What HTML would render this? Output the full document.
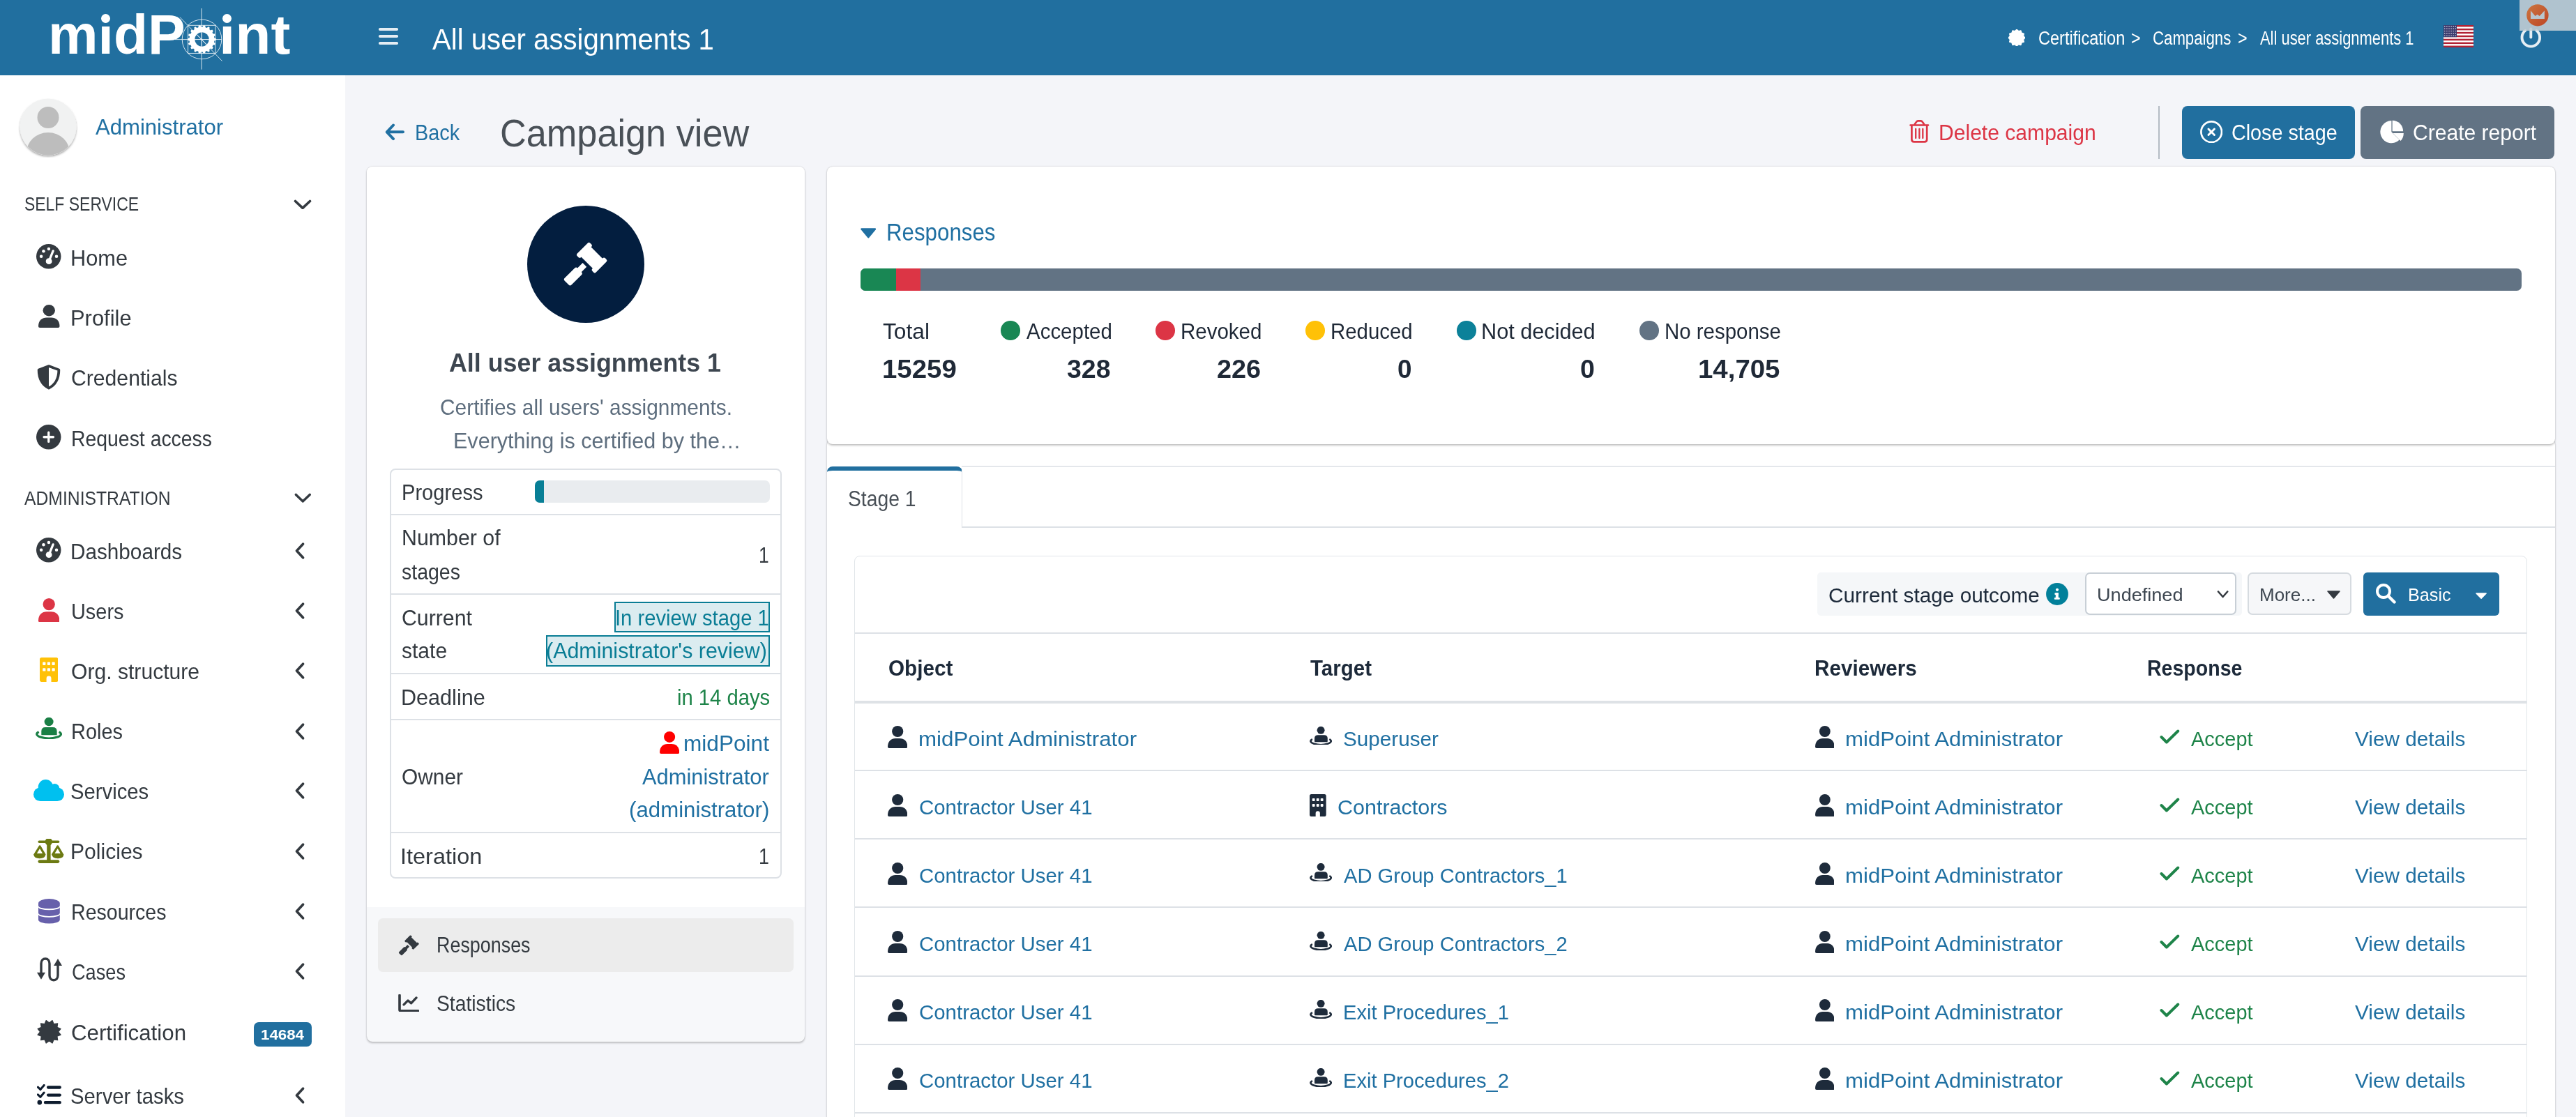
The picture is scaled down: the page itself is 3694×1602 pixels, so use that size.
<!DOCTYPE html><html><head><meta charset="utf-8"><style>html,body{margin:0;padding:0;width:3694px;height:1602px;overflow:hidden;position:relative}.t{position:absolute;white-space:nowrap;line-height:1;font-family:"Liberation Sans",sans-serif;transform-origin:0 0}.r{position:absolute;display:block}</style></head><body><div class="r" style="left:0px;top:0px;width:3694.00px;height:1602.00px;background:#f4f5f9;"></div>
<div class="r" style="left:0px;top:0px;width:3694.00px;height:108.00px;background:#216f9f;"></div>
<div class="r" style="left:0px;top:108px;width:495.00px;height:1494.00px;background:#ffffff;"></div>
<div class="t" style="left:69.41px;top:10.00px;font-size:79px;font-weight:700;color:#fff;transform:scaleX(1.0184)">midP</div>
<div class="t" style="left:314.19px;top:10.00px;font-size:79px;font-weight:700;color:#fff;transform:scaleX(1.0611)">int</div>
<div class="r" style="left:144px;top:15px;width:15.00px;height:22.50px;background:#216f9f;"></div>
<div class="r" style="left:318px;top:15px;width:15.00px;height:22.50px;background:#216f9f;"></div>
<div class="r" style="left:144.7px;top:19.6px;width:13.4px;height:13.4px;border-radius:50%;background:#fff"></div>
<div class="r" style="left:318.6px;top:19.6px;width:13.4px;height:13.4px;border-radius:50%;background:#fff"></div>
<svg class="r" style="left:269px;top:35.6px;width:41.00px;height:41.00px;" viewBox="0 0 41 41" preserveAspectRatio="none"><polygon points="40.76,19.28 40.76,21.72 38.38,22.56 38.01,24.68 39.96,26.29 39.13,28.57 36.60,28.55 35.52,30.42 36.81,32.59 35.24,34.46 32.88,33.57 31.22,34.96 31.69,37.44 29.58,38.66 27.66,37.01 25.63,37.75 25.22,40.24 22.82,40.67 21.58,38.47 19.42,38.47 18.18,40.67 15.78,40.24 15.37,37.75 13.34,37.01 11.42,38.66 9.31,37.44 9.78,34.96 8.12,33.57 5.76,34.46 4.19,32.59 5.48,30.42 4.40,28.55 1.87,28.57 1.04,26.29 2.99,24.68 2.62,22.56 0.24,21.72 0.24,19.28 2.62,18.44 2.99,16.32 1.04,14.71 1.87,12.43 4.40,12.45 5.48,10.58 4.19,8.41 5.76,6.54 8.12,7.43 9.78,6.04 9.31,3.56 11.42,2.34 13.34,3.99 15.37,3.25 15.78,0.76 18.18,0.33 19.42,2.53 21.58,2.53 22.82,0.33 25.22,0.76 25.63,3.25 27.66,3.99 29.58,2.34 31.69,3.56 31.22,6.04 32.88,7.43 35.24,6.54 36.81,8.41 35.52,10.58 36.60,12.45 39.13,12.43 39.96,14.71 38.01,16.32 38.38,18.44" fill="#fff"/><circle cx="20.5" cy="20.5" r="10.2" fill="#216f9f"/><path d="M20.5 10.3V30.7M10.3 20.5H30.7M13 13L28 28" stroke="#fff" stroke-width="0.5"/></svg>
<svg class="r" style="left:240px;top:10px;width:100.00px;height:92.00px;" viewBox="0 0 100 92" preserveAspectRatio="none"><g stroke="#fff" stroke-width="0.9" fill="none" opacity="0.9"><circle cx="49.5" cy="46.4" r="28.3"/><path d="M49 2V89.6M10.8 46.6H78M18 14.7L78.5 77.5"/><rect x="29.6" y="26.3" width="39.2" height="40.1"/></g></svg>
<div class="r" style="left:543.2px;top:40.2px;width:27.80px;height:3.60px;background:rgba(255,255,255,0.88);border-radius:1.8px"></div>
<div class="r" style="left:543.2px;top:50.3px;width:27.80px;height:3.60px;background:rgba(255,255,255,0.88);border-radius:1.8px"></div>
<div class="r" style="left:543.2px;top:60.4px;width:27.80px;height:3.60px;background:rgba(255,255,255,0.88);border-radius:1.8px"></div>
<div class="t" style="left:619.50px;top:35.00px;font-size:43.3px;font-weight:400;color:#fff;transform:scaleX(0.9274)">All user assignments 1</div>
<svg class="r" style="left:2880px;top:41.6px;width:24.00px;height:24.40px;" viewBox="0 0 24 24.4" preserveAspectRatio="none"><polygon points="12.00,0.20 14.59,2.54 18.00,1.81 19.07,5.13 22.39,6.20 21.66,9.61 24.00,12.20 21.66,14.79 22.39,18.20 19.07,19.27 18.00,22.59 14.59,21.86 12.00,24.20 9.41,21.86 6.00,22.59 4.93,19.27 1.61,18.20 2.34,14.79 0.00,12.20 2.34,9.61 1.61,6.20 4.93,5.13 6.00,1.81 9.41,2.54" fill="#fff" stroke="#fff" stroke-width="1.2" stroke-linejoin="round"/></svg>
<div class="t" style="left:2923.13px;top:42.00px;font-size:27px;font-weight:400;color:#fff;transform:scaleX(0.8714)">Certification</div>
<div class="t" style="left:3056.14px;top:42.00px;font-size:27px;font-weight:400;color:#fff;transform:scaleX(0.8571)">&gt;</div>
<div class="t" style="left:3087.18px;top:42.00px;font-size:27px;font-weight:400;color:#fff;transform:scaleX(0.8222)">Campaigns</div>
<div class="t" style="left:3208.74px;top:42.00px;font-size:27px;font-weight:400;color:#fff;transform:scaleX(0.8643)">&gt;</div>
<div class="t" style="left:3241.00px;top:42.00px;font-size:27px;font-weight:400;color:#fff;transform:scaleX(0.8118)">All user assignments 1</div>
<svg class="r" style="left:3504px;top:35.7px;width:43.00px;height:32.00px;" viewBox="0 0 43 32" preserveAspectRatio="none"><rect width="43" height="32" fill="#fff"/><rect y="0.00" width="43" height="2.46" fill="#b22234"/><rect y="4.92" width="43" height="2.46" fill="#b22234"/><rect y="9.85" width="43" height="2.46" fill="#b22234"/><rect y="14.77" width="43" height="2.46" fill="#b22234"/><rect y="19.69" width="43" height="2.46" fill="#b22234"/><rect y="24.62" width="43" height="2.46" fill="#b22234"/><rect y="29.54" width="43" height="2.46" fill="#b22234"/><rect width="19" height="17.2" fill="#3c3b6e"/><circle cx="1.8" cy="1.8" r="0.7" fill="#fff"/><circle cx="4.9" cy="1.8" r="0.7" fill="#fff"/><circle cx="8.0" cy="1.8" r="0.7" fill="#fff"/><circle cx="11.1" cy="1.8" r="0.7" fill="#fff"/><circle cx="14.2" cy="1.8" r="0.7" fill="#fff"/><circle cx="17.3" cy="1.8" r="0.7" fill="#fff"/><circle cx="1.8" cy="5.2" r="0.7" fill="#fff"/><circle cx="4.9" cy="5.2" r="0.7" fill="#fff"/><circle cx="8.0" cy="5.2" r="0.7" fill="#fff"/><circle cx="11.1" cy="5.2" r="0.7" fill="#fff"/><circle cx="14.2" cy="5.2" r="0.7" fill="#fff"/><circle cx="17.3" cy="5.2" r="0.7" fill="#fff"/><circle cx="1.8" cy="8.6" r="0.7" fill="#fff"/><circle cx="4.9" cy="8.6" r="0.7" fill="#fff"/><circle cx="8.0" cy="8.6" r="0.7" fill="#fff"/><circle cx="11.1" cy="8.6" r="0.7" fill="#fff"/><circle cx="14.2" cy="8.6" r="0.7" fill="#fff"/><circle cx="17.3" cy="8.6" r="0.7" fill="#fff"/><circle cx="1.8" cy="12.0" r="0.7" fill="#fff"/><circle cx="4.9" cy="12.0" r="0.7" fill="#fff"/><circle cx="8.0" cy="12.0" r="0.7" fill="#fff"/><circle cx="11.1" cy="12.0" r="0.7" fill="#fff"/><circle cx="14.2" cy="12.0" r="0.7" fill="#fff"/><circle cx="17.3" cy="12.0" r="0.7" fill="#fff"/><circle cx="1.8" cy="15.4" r="0.7" fill="#fff"/><circle cx="4.9" cy="15.4" r="0.7" fill="#fff"/><circle cx="8.0" cy="15.4" r="0.7" fill="#fff"/><circle cx="11.1" cy="15.4" r="0.7" fill="#fff"/><circle cx="14.2" cy="15.4" r="0.7" fill="#fff"/><circle cx="17.3" cy="15.4" r="0.7" fill="#fff"/></svg>
<svg class="r" style="left:3612px;top:34.6px;width:34.00px;height:34.00px;" viewBox="0 0 34 34" preserveAspectRatio="none"><path d="M9.3 8.8A12.8 12.8 0 1 0 25.3 8.8" stroke="#e6eef4" stroke-width="3.9" fill="none" stroke-linecap="round"/><path d="M17.3 6.4V18.6" stroke="#e6eef4" stroke-width="3.9" stroke-linecap="round"/></svg>
<div class="r" style="left:3613px;top:0px;width:81.00px;height:43.70px;background:rgba(192,204,212,0.9);"></div>
<svg class="r" style="left:3623px;top:6px;width:31.80px;height:31.60px;" viewBox="0 0 32 32" preserveAspectRatio="none"><defs><linearGradient id="og" x1="0" y1="0" x2="1" y2="1"><stop offset="0" stop-color="#cc7640"/><stop offset="1" stop-color="#bd4525"/></linearGradient></defs><circle cx="16" cy="16" r="15.8" fill="url(#og)"/><path d="M6 9.4L12.6 17.2L15.6 14.9L18.8 17.2L26 9.4V21.2H6Z" fill="#b9c6ce"/></svg>
<svg class="r" style="left:26px;top:139px;width:86.00px;height:87.00px;" viewBox="0 0 86 87" preserveAspectRatio="none"><defs><filter id="sh" x="-20%" y="-20%" width="140%" height="150%"><feDropShadow dx="0" dy="2" stdDeviation="1.6" flood-color="#000" flood-opacity="0.35"/></filter><clipPath id="cc"><circle cx="43" cy="43" r="40.5"/></clipPath></defs><circle cx="43" cy="43" r="40.5" fill="#f1f2f2" filter="url(#sh)"/><g clip-path="url(#cc)"><circle cx="43" cy="29.5" r="15.5" fill="#bdbdbd"/><ellipse cx="43" cy="80" rx="31" ry="29" fill="#bdbdbd"/></g></svg>
<div class="t" style="left:137.00px;top:166.00px;font-size:32px;font-weight:400;color:#2070a2;transform:scaleX(0.9713)">Administrator</div>
<div class="t" style="left:35.17px;top:279.00px;font-size:27.6px;font-weight:400;color:#343a40;transform:scaleX(0.8316)">SELF SERVICE</div>
<svg class="r" style="left:421px;top:285.6px;width:26.00px;height:14.90px;" viewBox="0 0 26 15" preserveAspectRatio="none"><path d="M2.5 2.5L13 12.5L23.5 2.5" stroke="#343a40" stroke-width="3.6" fill="none" stroke-linecap="round" stroke-linejoin="round"/></svg>
<svg class="r" style="left:421.8px;top:706.6px;width:24.60px;height:14.40px;" viewBox="0 0 26 15" preserveAspectRatio="none"><path d="M2.5 2.5L13 12.5L23.5 2.5" stroke="#343a40" stroke-width="3.6" fill="none" stroke-linecap="round" stroke-linejoin="round"/></svg>
<div class="t" style="left:101.38px;top:355.00px;font-size:30.5px;font-weight:400;color:#343a40;transform:scaleX(1.0077)">Home</div>
<svg class="r" style="left:52px;top:350px;width:35.50px;height:35.50px;" viewBox="0 0 36 36" preserveAspectRatio="none"><circle cx="18" cy="18" r="18" fill="#343a40"/><g fill="#fff"><circle cx="7.2" cy="18" r="2.3"/><circle cx="10.6" cy="10.3" r="2.3"/><circle cx="18.2" cy="7" r="2.3"/><circle cx="29.4" cy="18" r="2.3"/><circle cx="18.4" cy="25" r="4.5"/></g><path d="M18.4 25L24.5 10" stroke="#fff" stroke-width="3.3" stroke-linecap="round"/></svg>
<div class="t" style="left:101.37px;top:441.00px;font-size:30.5px;font-weight:400;color:#343a40;transform:scaleX(1.0131)">Profile</div>
<svg class="r" style="left:55px;top:437px;width:30.50px;height:33.00px;" viewBox="0 0 28 32" preserveAspectRatio="none"><circle cx="14" cy="8" r="8" fill="#343a40"/><path d="M0 30C0 22 5 18 11 18H17C23 18 28 22 28 30Q28 32 26 32H2Q0 32 0 30Z" fill="#343a40"/></svg>
<div class="t" style="left:102.41px;top:527.00px;font-size:30.5px;font-weight:400;color:#343a40;transform:scaleX(0.9888)">Credentials</div>
<svg class="r" style="left:53px;top:523.2px;width:34.00px;height:35.60px;" viewBox="0 0 32 36" preserveAspectRatio="none"><path d="M16 2L29.5 7.5C29.5 21 25 29 16 34C7 29 2.5 21 2.5 7.5Z" stroke="#343a40" stroke-width="3.6" fill="none" stroke-linejoin="round"/><path d="M16 2L2.5 7.5C2.5 21 7 29 16 34Z" fill="#343a40"/></svg>
<div class="t" style="left:101.54px;top:614.00px;font-size:30.5px;font-weight:400;color:#343a40;transform:scaleX(0.9308)">Request access</div>
<svg class="r" style="left:52px;top:609px;width:35.50px;height:35.50px;" viewBox="0 0 36 36" preserveAspectRatio="none"><circle cx="18" cy="18" r="18" fill="#343a40"/><path d="M18 11.2V24.8M11.2 18H24.8" stroke="#fff" stroke-width="3.3" stroke-linecap="round"/></svg>
<div class="t" style="left:35.20px;top:701.00px;font-size:27.6px;font-weight:400;color:#343a40;transform:scaleX(0.8957)">ADMINISTRATION</div>
<div class="t" style="left:101.45px;top:776.00px;font-size:30.5px;font-weight:400;color:#343a40;transform:scaleX(0.9739)">Dashboards</div>
<svg class="r" style="left:423px;top:777.8px;width:14.00px;height:24.00px;" viewBox="0 0 14 24" preserveAspectRatio="none"><path d="M11.5 2.2L2.5 12L11.5 21.8" stroke="#343a40" stroke-width="3.6" fill="none" stroke-linecap="round" stroke-linejoin="round"/></svg>
<div class="t" style="left:101.51px;top:862.00px;font-size:30.5px;font-weight:400;color:#343a40;transform:scaleX(0.9474)">Users</div>
<svg class="r" style="left:423px;top:863.7px;width:14.00px;height:24.00px;" viewBox="0 0 14 24" preserveAspectRatio="none"><path d="M11.5 2.2L2.5 12L11.5 21.8" stroke="#343a40" stroke-width="3.6" fill="none" stroke-linecap="round" stroke-linejoin="round"/></svg>
<div class="t" style="left:102.41px;top:948.00px;font-size:30.5px;font-weight:400;color:#343a40;transform:scaleX(0.9875)">Org. structure</div>
<svg class="r" style="left:423px;top:949.7px;width:14.00px;height:24.00px;" viewBox="0 0 14 24" preserveAspectRatio="none"><path d="M11.5 2.2L2.5 12L11.5 21.8" stroke="#343a40" stroke-width="3.6" fill="none" stroke-linecap="round" stroke-linejoin="round"/></svg>
<div class="t" style="left:101.50px;top:1034.00px;font-size:30.5px;font-weight:400;color:#343a40;transform:scaleX(0.9480)">Roles</div>
<svg class="r" style="left:423px;top:1036.5px;width:14.00px;height:24.00px;" viewBox="0 0 14 24" preserveAspectRatio="none"><path d="M11.5 2.2L2.5 12L11.5 21.8" stroke="#343a40" stroke-width="3.6" fill="none" stroke-linecap="round" stroke-linejoin="round"/></svg>
<div class="t" style="left:101.48px;top:1120.00px;font-size:30.5px;font-weight:400;color:#343a40;transform:scaleX(0.9588)">Services</div>
<svg class="r" style="left:423px;top:1121.8px;width:14.00px;height:24.00px;" viewBox="0 0 14 24" preserveAspectRatio="none"><path d="M11.5 2.2L2.5 12L11.5 21.8" stroke="#343a40" stroke-width="3.6" fill="none" stroke-linecap="round" stroke-linejoin="round"/></svg>
<div class="t" style="left:101.43px;top:1206.00px;font-size:30.5px;font-weight:400;color:#343a40;transform:scaleX(0.9863)">Policies</div>
<svg class="r" style="left:423px;top:1208.5px;width:14.00px;height:24.00px;" viewBox="0 0 14 24" preserveAspectRatio="none"><path d="M11.5 2.2L2.5 12L11.5 21.8" stroke="#343a40" stroke-width="3.6" fill="none" stroke-linecap="round" stroke-linejoin="round"/></svg>
<div class="t" style="left:101.53px;top:1293.00px;font-size:30.5px;font-weight:400;color:#343a40;transform:scaleX(0.9364)">Resources</div>
<svg class="r" style="left:423px;top:1294.9px;width:14.00px;height:24.00px;" viewBox="0 0 14 24" preserveAspectRatio="none"><path d="M11.5 2.2L2.5 12L11.5 21.8" stroke="#343a40" stroke-width="3.6" fill="none" stroke-linecap="round" stroke-linejoin="round"/></svg>
<div class="t" style="left:102.51px;top:1379.00px;font-size:30.5px;font-weight:400;color:#343a40;transform:scaleX(0.8905)">Cases</div>
<svg class="r" style="left:423px;top:1381.4px;width:14.00px;height:24.00px;" viewBox="0 0 14 24" preserveAspectRatio="none"><path d="M11.5 2.2L2.5 12L11.5 21.8" stroke="#343a40" stroke-width="3.6" fill="none" stroke-linecap="round" stroke-linejoin="round"/></svg>
<div class="t" style="left:102.38px;top:1466.00px;font-size:30.5px;font-weight:400;color:#343a40;transform:scaleX(1.0247)">Certification</div>
<div class="t" style="left:101.48px;top:1557.00px;font-size:30.5px;font-weight:400;color:#343a40;transform:scaleX(0.9614)">Server tasks</div>
<svg class="r" style="left:423px;top:1558.8px;width:14.00px;height:24.00px;" viewBox="0 0 14 24" preserveAspectRatio="none"><path d="M11.5 2.2L2.5 12L11.5 21.8" stroke="#343a40" stroke-width="3.6" fill="none" stroke-linecap="round" stroke-linejoin="round"/></svg>
<svg class="r" style="left:52.4px;top:771px;width:35.50px;height:35.50px;" viewBox="0 0 36 36" preserveAspectRatio="none"><circle cx="18" cy="18" r="18" fill="#343a40"/><g fill="#fff"><circle cx="7.2" cy="18" r="2.3"/><circle cx="10.6" cy="10.3" r="2.3"/><circle cx="18.2" cy="7" r="2.3"/><circle cx="29.4" cy="18" r="2.3"/><circle cx="18.4" cy="25" r="4.5"/></g><path d="M18.4 25L24.5 10" stroke="#fff" stroke-width="3.3" stroke-linecap="round"/></svg>
<svg class="r" style="left:55px;top:857.6px;width:30.40px;height:34.40px;" viewBox="0 0 28 32" preserveAspectRatio="none"><circle cx="14" cy="8" r="8" fill="#dc3545"/><path d="M0 30C0 22 5 18 11 18H17C23 18 28 22 28 30Q28 32 26 32H2Q0 32 0 30Z" fill="#dc3545"/></svg>
<svg class="r" style="left:57.1px;top:943px;width:26.30px;height:35.00px;" viewBox="0 0 26.3 35" preserveAspectRatio="none"><path d="M0 2.8Q0 0 2.8 0H23.5Q26.3 0 26.3 2.8V32.6Q26.3 35 23.9 35H16.5V30Q16.5 26.6 13.05 26.6Q9.6 26.6 9.6 30V35H2.4Q0 35 0 32.6Z" fill="#ffc107"/><rect x="4.20" y="6.60" width="4.2" height="4.3" rx="0.9" fill="#fff"/><rect x="10.85" y="6.60" width="4.2" height="4.3" rx="0.9" fill="#fff"/><rect x="17.50" y="6.60" width="4.2" height="4.3" rx="0.9" fill="#fff"/><rect x="4.20" y="15.30" width="4.2" height="4.3" rx="0.9" fill="#fff"/><rect x="10.85" y="15.30" width="4.2" height="4.3" rx="0.9" fill="#fff"/><rect x="17.50" y="15.30" width="4.2" height="4.3" rx="0.9" fill="#fff"/></svg>
<svg class="r" style="left:51px;top:1029px;width:38.00px;height:30.50px;" viewBox="0 0 32 27" preserveAspectRatio="none"><circle cx="16.1" cy="5.4" r="5.5" fill="#1a7f45"/><path d="M7 21.6V17.4Q7 12.4 12 12.4H20.8Q25.8 12.4 25.8 17.4V21.6Q25.8 22.4 25 22.4H7.8Q7 22.4 7 21.6Z" fill="#1a7f45"/><path d="M3.9 18.3A14.6 5.2 0 1 0 28.3 18.3" stroke="#1a7f45" stroke-width="2.7" fill="none"/></svg>
<svg class="r" style="left:48.3px;top:1118px;width:44.00px;height:31.00px;" viewBox="0 0 44 31" preserveAspectRatio="none"><g fill="#00c0ef"><rect x="0" y="11.5" width="44" height="19.5" rx="9.75"/><circle cx="17.5" cy="10.8" r="10.8"/><circle cx="30.5" cy="12.8" r="6.8"/></g></svg>
<svg class="r" style="left:48.3px;top:1203.4px;width:44.00px;height:35.00px;" viewBox="0 0 44 35" preserveAspectRatio="none"><g fill="#6c7a12"><rect x="6.5" y="2.6" width="30.8" height="3.4" rx="1.7"/><circle cx="21.9" cy="4.2" r="5.2"/><rect x="19.2" y="4" width="5.4" height="28"/><rect x="6.5" y="30.2" width="30.8" height="4.8" rx="2.4"/><path d="M0.4 22.1H17.2Q17.2 28.3 8.8 28.3Q0.4 28.3 0.4 22.1Z"/><path d="M26.6 22.1H43.4Q43.4 28.3 35 28.3Q26.6 28.3 26.6 22.1Z"/></g><g stroke="#6c7a12" stroke-width="3.2" fill="none" stroke-linejoin="round"><path d="M9.1 11L2 22.6H15.9Z"/><path d="M34.7 11L27.6 22.6H41.5Z"/></g></svg>
<svg class="r" style="left:54.8px;top:1289px;width:30.80px;height:35.70px;" viewBox="0 0 31 36" preserveAspectRatio="none"><g fill="#6760ab"><path d="M0 6.5A15.5 6.5 0 0 1 31 6.5V10A15.5 4.4 0 0 1 0 10Z"/><path d="M0 12A15.5 4.4 0 0 0 31 12V20.7A15.5 4.4 0 0 1 0 20.7Z"/><path d="M0 22.7A15.5 4.4 0 0 0 31 22.7V30.5A15.5 5.3 0 0 1 0 30.5Z"/></g></svg>
<svg class="r" style="left:52.8px;top:1373px;width:36.00px;height:34.70px;" viewBox="0 0 36 35" preserveAspectRatio="none"><path d="M6 24V9C6 4.5 8.5 2 12 2C15.5 2 18 4.5 18 9V26C18 30.5 20.5 33 24 33C27.5 33 30 30.5 30 26V9" stroke="#343a40" stroke-width="3.4" fill="none"/><path d="M0 22H12L6 32Z" fill="#343a40"/><path d="M24 12H36L30 2Z" fill="#343a40"/></svg>
<svg class="r" style="left:52.8px;top:1461.7px;width:35.20px;height:35.70px;" viewBox="0 0 35 36" preserveAspectRatio="none"><polygon points="21.90,1.58 24.00,6.74 29.52,5.98 28.76,11.50 33.92,13.60 30.50,18.00 33.92,22.40 28.76,24.50 29.52,30.02 24.00,29.26 21.90,34.42 17.50,31.00 13.10,34.42 11.00,29.26 5.48,30.02 6.24,24.50 1.08,22.40 4.50,18.00 1.08,13.60 6.24,11.50 5.48,5.98 11.00,6.74 13.10,1.58 17.50,5.00" fill="#343a40" stroke="#343a40" stroke-width="1.2" stroke-linejoin="round"/></svg>
<svg class="r" style="left:52.8px;top:1555px;width:35.20px;height:30.00px;" viewBox="0 0 36 30" preserveAspectRatio="none"><g stroke="#0e1c2e" stroke-width="3.1" fill="none" stroke-linecap="round" stroke-linejoin="round"><path d="M1.4 4.2L5.1 7.6L10.4 1.4M1.4 14.9L5.1 18.3L10.4 12.1"/></g><circle cx="3.9" cy="26.1" r="3.4" fill="#0e1c2e"/><g stroke="#0e1c2e" stroke-width="4.3" stroke-linecap="round"><path d="M16.4 4.5H33.6M16.4 15.6H33.6M12.2 26.2H33.6"/></g></svg>
<div class="r" style="left:364.2px;top:1466.3px;width:82.50px;height:35.20px;background:#216f9f;border-radius:7px"></div>
<div class="t" style="left:373.81px;top:1474.00px;font-size:20.5px;font-weight:700;color:#fff;transform:scaleX(1.0877)">14684</div>
<svg class="r" style="left:551.6px;top:177px;width:28.40px;height:24.60px;" viewBox="0 0 28.4 24.6" preserveAspectRatio="none"><path d="M12 2.5L2.8 12.3L12 22.1M3.5 12.3H26" stroke="#2070a2" stroke-width="4" fill="none" stroke-linecap="round" stroke-linejoin="round"/></svg>
<div class="t" style="left:595.11px;top:175.00px;font-size:30.5px;font-weight:400;color:#2070a2;transform:scaleX(0.9470)">Back</div>
<div class="t" style="left:716.55px;top:164.00px;font-size:55px;font-weight:400;color:#495057;transform:scaleX(0.9501)">Campaign view</div>
<svg class="r" style="left:2730px;top:165px;width:45.00px;height:50.00px;" viewBox="0 0 45 50" preserveAspectRatio="none"><g stroke="#dc3545" stroke-width="2.7" fill="none" stroke-linecap="round" stroke-linejoin="round"><path d="M9.6 14.5H35M15.8 13L18.6 9.3Q19.2 8.4 20.3 8.4H24.6Q25.7 8.4 26.3 9.3L29.1 13M11.4 15.5V35Q11.4 38.4 14.8 38.4H29.8Q33.2 38.4 33.2 35V15.5"/><path d="M17.2 20V33M22.4 20V33M27.3 20V33" stroke-width="2.3"/></g></svg>
<div class="t" style="left:2779.83px;top:175.00px;font-size:30.5px;font-weight:400;color:#dc3545;transform:scaleX(0.9862)">Delete campaign</div>
<div class="r" style="left:3095px;top:152.4px;width:2.00px;height:75.20px;background:#b4bcc4;"></div>
<div class="r" style="left:3129px;top:152px;width:247.80px;height:75.60px;background:#216f9f;border-radius:8px"></div>
<svg class="r" style="left:3154.6px;top:173px;width:32.40px;height:32.40px;" viewBox="0 0 32 32" preserveAspectRatio="none"><circle cx="16" cy="16" r="14.6" stroke="#fff" stroke-width="2.7" fill="none"/><path d="M11.8 11.8L20.2 20.2M20.2 11.8L11.8 20.2" stroke="#fff" stroke-width="2.9" stroke-linecap="round"/></svg>
<div class="t" style="left:3199.80px;top:174.00px;font-size:32px;font-weight:400;color:#fff;transform:scaleX(0.8976)">Close stage</div>
<div class="r" style="left:3385.3px;top:152px;width:278.20px;height:75.60px;background:#627384;border-radius:8px"></div>
<svg class="r" style="left:3410px;top:170px;width:40.00px;height:40.00px;" viewBox="0 0 40 40" preserveAspectRatio="none"><g fill="#fff"><path d="M19.4 19.2V3.1A16.1 16.1 0 1 0 30.8 30.6Z"/><path d="M20.6 18.2V2.7A15.5 15.5 0 0 1 36.1 18.2Z"/><path d="M21.5 20.9H36.8A15.5 15.5 0 0 1 32.5 31.9Z"/></g></svg>
<div class="t" style="left:3460.12px;top:174.00px;font-size:32px;font-weight:400;color:#fff;transform:scaleX(0.9396)">Create report</div>
<div class="r" style="left:526px;top:239px;width:628.20px;height:1255.00px;background:#f7f8fa;box-shadow:0 0 1.5px rgba(0,0,0,0.18),0 1.5px 3px rgba(0,0,0,0.22);border-radius:8px"></div>
<div class="r" style="left:526px;top:239px;width:628.20px;height:1062.00px;background:#ffffff;border-radius:8px 8px 0 0"></div>
<div class="r" style="left:755.7px;top:294.6px;width:168px;height:168px;border-radius:50%;background:#031e3f"></div>
<svg class="r" style="left:807px;top:347px;width:65.00px;height:64.00px;" viewBox="0 0 65 64" preserveAspectRatio="none"><g fill="#ffffff" transform="translate(41.7 22.6) rotate(45)"><rect x="-19" y="-13.1" width="7.5" height="26.2" rx="2.6"/><rect x="11.5" y="-13.1" width="7.5" height="26.2" rx="2.6"/><rect x="-13" y="-10" width="26" height="20"/><rect x="-4" y="14.6" width="8" height="12"/><rect x="-6.9" y="25" width="13.8" height="26" rx="2.8"/></g></svg>
<div class="t" style="left:644.03px;top:502.00px;font-size:37px;font-weight:700;color:#3d4650;transform:scaleX(0.9676)">All user assignments 1</div>
<div class="t" style="left:631.05px;top:569.00px;font-size:31.4px;font-weight:400;color:#5e6e7e;transform:scaleX(0.9515)">Certifies all users&#x27; assignments.</div>
<div class="t" style="left:650.05px;top:617.00px;font-size:31.4px;font-weight:400;color:#5e6e7e;transform:scaleX(0.9730)">Everything is certified by the…</div>
<div class="r" style="left:559px;top:671.5px;width:562.00px;height:588.50px;background:#fff;border:2px solid #dde1e6;border-radius:8px;box-sizing:border-box"></div>
<div class="r" style="left:560px;top:736.8px;width:560.00px;height:2.00px;background:#dde1e6;"></div>
<div class="r" style="left:560px;top:851px;width:560.00px;height:2.00px;background:#dde1e6;"></div>
<div class="r" style="left:560px;top:964.5px;width:560.00px;height:2.00px;background:#dde1e6;"></div>
<div class="r" style="left:560px;top:1030.8px;width:560.00px;height:2.00px;background:#dde1e6;"></div>
<div class="r" style="left:560px;top:1193px;width:560.00px;height:2.00px;background:#dde1e6;"></div>
<div class="r" style="left:766.8px;top:688.9px;width:337.00px;height:31.80px;background:#e9ecef;border-radius:7px"></div>
<div class="r" style="left:766.8px;top:688.9px;width:13.70px;height:31.80px;background:#087f96;border-radius:7px 0 0 7px"></div>
<div class="t" style="left:575.89px;top:691.00px;font-size:30.5px;font-weight:400;color:#343a40;transform:scaleX(0.9546)">Progress</div>
<div class="t" style="left:575.81px;top:756.00px;font-size:30.5px;font-weight:400;color:#343a40;transform:scaleX(0.9943)">Number of</div>
<div class="t" style="left:576.07px;top:805.00px;font-size:30.5px;font-weight:400;color:#343a40;transform:scaleX(0.9341)">stages</div>
<div class="t" style="left:1087.77px;top:781.00px;font-size:30.5px;font-weight:400;color:#343a40;transform:scaleX(0.8643)">1</div>
<div class="t" style="left:576.01px;top:871.00px;font-size:30.5px;font-weight:400;color:#343a40;transform:scaleX(0.9921)">Current</div>
<div class="t" style="left:576.02px;top:918.00px;font-size:30.5px;font-weight:400;color:#343a40;transform:scaleX(0.9844)">state</div>
<div class="r" style="left:881.1px;top:863.2px;width:222.80px;height:44.30px;background:#dbecf0;border:2px solid #0a7d95;box-sizing:border-box"></div>
<div class="r" style="left:782.8px;top:911.1px;width:321.10px;height:44.50px;background:#dbecf0;border:2px solid #0a7d95;box-sizing:border-box"></div>
<div class="t" style="left:881.63px;top:871.00px;font-size:30.5px;font-weight:400;color:#0a7d95;transform:scaleX(0.9573)">In review stage 1</div>
<div class="t" style="left:783.31px;top:918.00px;font-size:30.5px;font-weight:400;color:#0a7d95;transform:scaleX(0.9975)">(Administrator&#x27;s review)</div>
<div class="t" style="left:574.59px;top:985.00px;font-size:30.5px;font-weight:400;color:#343a40;transform:scaleX(1.0026)">Deadline</div>
<div class="t" style="left:970.78px;top:985.00px;font-size:30.5px;font-weight:400;color:#1e8449;transform:scaleX(0.9581)">in 14 days</div>
<div class="t" style="left:576.32px;top:1099.00px;font-size:30.5px;font-weight:400;color:#343a40;transform:scaleX(0.9787)">Owner</div>
<svg class="r" style="left:946px;top:1049px;width:28.20px;height:31.90px;" viewBox="0 0 28 32" preserveAspectRatio="none"><circle cx="14" cy="8" r="8" fill="#ff0000"/><path d="M0 30C0 22 5 18 11 18H17C23 18 28 22 28 30Q28 32 26 32H2Q0 32 0 30Z" fill="#ff0000"/></svg>
<div class="t" style="left:979.73px;top:1051.00px;font-size:30.5px;font-weight:400;color:#2070a2;transform:scaleX(1.0359)">midPoint</div>
<div class="t" style="left:921.00px;top:1099.00px;font-size:30.5px;font-weight:400;color:#2070a2;transform:scaleX(1.0111)">Administrator</div>
<div class="t" style="left:902.25px;top:1146.00px;font-size:30.5px;font-weight:400;color:#2070a2;transform:scaleX(1.0238)">(administrator)</div>
<div class="t" style="left:574.11px;top:1213.00px;font-size:30.5px;font-weight:400;color:#343a40;transform:scaleX(1.0638)">Iteration</div>
<div class="t" style="left:1087.84px;top:1213.00px;font-size:30.5px;font-weight:400;color:#343a40;transform:scaleX(0.8786)">1</div>
<div class="r" style="left:542.2px;top:1317px;width:595.80px;height:76.70px;background:#ececec;border-radius:7px"></div>
<svg class="r" style="left:570.9px;top:1340.7px;width:30.50px;height:30.00px;" viewBox="0 0 65 64" preserveAspectRatio="none"><g fill="#343a40" transform="translate(41.7 22.6) rotate(45)"><rect x="-19" y="-13.1" width="7.5" height="26.2" rx="2.6"/><rect x="11.5" y="-13.1" width="7.5" height="26.2" rx="2.6"/><rect x="-13" y="-10" width="26" height="20"/><rect x="-4" y="14.6" width="8" height="12"/><rect x="-6.9" y="25" width="13.8" height="26" rx="2.8"/></g></svg>
<div class="t" style="left:625.74px;top:1340.00px;font-size:30.5px;font-weight:400;color:#343a40;transform:scaleX(0.8819)">Responses</div>
<svg class="r" style="left:570.9px;top:1425.8px;width:30.10px;height:25.70px;" viewBox="0 0 30 26" preserveAspectRatio="none"><path d="M2 1.5V22.5Q2 24 3.5 24H28.5" stroke="#343a40" stroke-width="3.6" fill="none" stroke-linecap="round"/><path d="M8 15L14 9L18.5 13L26 5" stroke="#343a40" stroke-width="3.4" fill="none" stroke-linecap="round" stroke-linejoin="round"/></svg>
<div class="t" style="left:625.64px;top:1424.00px;font-size:30.5px;font-weight:400;color:#343a40;transform:scaleX(0.9277)">Statistics</div>
<div class="r" style="left:1185.5px;top:630px;width:2478.00px;height:1070.00px;background:#ffffff;box-shadow:0 0 1.5px rgba(0,0,0,0.18),0 1.5px 3px rgba(0,0,0,0.22);border-radius:8px"></div>
<div class="r" style="left:1185.5px;top:239px;width:2478.00px;height:398.00px;background:#ffffff;box-shadow:0 0 1.5px rgba(0,0,0,0.18),0 1.5px 3px rgba(0,0,0,0.22);border-radius:8px"></div>
<svg class="r" style="left:1233.8px;top:327px;width:22.50px;height:14.70px;" viewBox="0 0 22.5 14.7" preserveAspectRatio="none"><path d="M1.5 1.5H21L11.25 13.2Z" fill="#2070a2" stroke="#2070a2" stroke-width="2.4" stroke-linejoin="round"/></svg>
<div class="t" style="left:1271.07px;top:316.00px;font-size:34.4px;font-weight:400;color:#2070a2;transform:scaleX(0.9095)">Responses</div>
<div class="r" style="left:1233.8px;top:385px;width:2382.20px;height:31.50px;background:#627384;border-radius:7px"></div>
<div class="r" style="left:1233.8px;top:385px;width:51.20px;height:31.50px;background:#198754;border-radius:7px 0 0 7px"></div>
<div class="r" style="left:1285px;top:385px;width:35.00px;height:31.50px;background:#dc3545;"></div>
<div class="t" style="left:1265.58px;top:460.00px;font-size:31px;font-weight:400;color:#1f2937;transform:scaleX(1.0222)">Total</div>
<div class="r" style="left:1434.9px;top:460px;width:27.8px;height:27.6px;border-radius:50%;background:#198754"></div>
<div class="t" style="left:1471.70px;top:460.00px;font-size:31px;font-weight:400;color:#1f2937;transform:scaleX(0.9504)">Accepted</div>
<div class="t" style="left:1529.77px;top:512.00px;font-size:36.5px;font-weight:700;color:#1f2937;transform:scaleX(1.0267)">328</div>
<div class="r" style="left:1657.4px;top:460px;width:27.5px;height:27.6px;border-radius:50%;background:#dc3545"></div>
<div class="t" style="left:1692.80px;top:460.00px;font-size:31px;font-weight:400;color:#1f2937;transform:scaleX(0.9517)">Revoked</div>
<div class="t" style="left:1744.76px;top:512.00px;font-size:36.5px;font-weight:700;color:#1f2937;transform:scaleX(1.0373)">226</div>
<div class="r" style="left:1872.4px;top:460px;width:27.6px;height:27.6px;border-radius:50%;background:#ffc107"></div>
<div class="t" style="left:1907.90px;top:460.00px;font-size:31px;font-weight:400;color:#1f2937;transform:scaleX(0.9475)">Reduced</div>
<div class="t" style="left:2004.29px;top:512.00px;font-size:36.5px;font-weight:700;color:#1f2937;transform:scaleX(1.0111)">0</div>
<div class="r" style="left:2089.4px;top:460px;width:27.4px;height:27.6px;border-radius:50%;background:#0c8199"></div>
<div class="t" style="left:2124.32px;top:460.00px;font-size:31px;font-weight:400;color:#1f2937;transform:scaleX(0.9888)">Not decided</div>
<div class="t" style="left:2265.97px;top:512.00px;font-size:36.5px;font-weight:700;color:#1f2937;transform:scaleX(1.0278)">0</div>
<div class="r" style="left:2351.4px;top:460px;width:27.6px;height:27.6px;border-radius:50%;background:#627384"></div>
<div class="t" style="left:2386.70px;top:460.00px;font-size:31px;font-weight:400;color:#1f2937;transform:scaleX(0.9491)">No response</div>
<div class="t" style="left:2435.20px;top:512.00px;font-size:36.5px;font-weight:700;color:#1f2937;transform:scaleX(1.0523)">14,705</div>
<div class="t" style="left:1265.40px;top:512.00px;font-size:36.5px;font-weight:700;color:#1f2937;transform:scaleX(1.0520)">15259</div>
<div class="r" style="left:1378.6px;top:668px;width:2285.40px;height:1.50px;background:#e4e7eb;"></div>
<div class="r" style="left:1378.6px;top:754.5px;width:2285.40px;height:2.00px;background:#dde1e6;"></div>
<div class="r" style="left:1185.5px;top:669px;width:194.10px;height:87.50px;background:#fff;border-top:6.5px solid #216f9f;border-right:1.5px solid #dde1e6;border-radius:8px 8px 0 0;box-sizing:border-box"></div>
<div class="t" style="left:1216.15px;top:700.00px;font-size:30.5px;font-weight:400;color:#495057;transform:scaleX(0.9265)">Stage 1</div>
<div class="r" style="left:1225.3px;top:797px;width:2399.20px;height:903.00px;background:#fff;border:1.5px solid #e1e5e9;border-radius:8px;box-sizing:border-box"></div>
<div class="r" style="left:1226px;top:906.6px;width:2397.00px;height:2.00px;background:#dde1e6;"></div>
<div class="r" style="left:2606px;top:821px;width:608.60px;height:61.60px;background:#f5f7f9;border-radius:5px"></div>
<div class="t" style="left:2621.99px;top:839.00px;font-size:29.5px;font-weight:400;color:#1d2a3a;transform:scaleX(1.0091)">Current stage outcome</div>
<svg class="r" style="left:2933.5px;top:836.1px;width:32.00px;height:32.00px;" viewBox="0 0 32 32" preserveAspectRatio="none"><circle cx="16" cy="16" r="15.9" fill="#02809a"/><g fill="#fff"><circle cx="16" cy="9.8" r="2.1"/><rect x="12.4" y="14.2" width="5.4" height="2.8" rx="0.8"/><rect x="13.8" y="14.2" width="4" height="8.6"/><rect x="11.9" y="21.1" width="7.9" height="2.6" rx="0.9"/></g></svg>
<div class="r" style="left:2990px;top:821.4px;width:216.50px;height:61.00px;background:#fff;border:2px solid #c8cfd6;border-radius:7px;box-sizing:border-box"></div>
<div class="t" style="left:3006.86px;top:840.00px;font-size:26.5px;font-weight:400;color:#3d4650;transform:scaleX(1.0222)">Undefined</div>
<svg class="r" style="left:3178.5px;top:846px;width:17.20px;height:13.00px;" viewBox="0 0 17.2 13" preserveAspectRatio="none"><path d="M2 2.5L8.6 10L15.2 2.5" stroke="#343a40" stroke-width="2.6" fill="none" stroke-linecap="round" stroke-linejoin="round"/></svg>
<div class="r" style="left:3223.2px;top:821.4px;width:149.10px;height:61.00px;background:#f6f7f9;border:2px solid #d6dbe0;border-radius:7px;box-sizing:border-box"></div>
<div class="t" style="left:3240.04px;top:840.00px;font-size:26.5px;font-weight:400;color:#3d4650;transform:scaleX(0.9808)">More...</div>
<svg class="r" style="left:3337px;top:847px;width:19.00px;height:12.00px;" viewBox="0 0 19 12" preserveAspectRatio="none"><path d="M1 1H18L9.5 11Z" fill="#343a40" stroke="#343a40" stroke-width="1.5" stroke-linejoin="round"/></svg>
<div class="r" style="left:3389px;top:821px;width:194.50px;height:61.60px;background:#216f9f;border-radius:6px"></div>
<svg class="r" style="left:3406px;top:836px;width:30.00px;height:30.00px;" viewBox="0 0 30 30" preserveAspectRatio="none"><circle cx="12" cy="12" r="9" stroke="#fff" stroke-width="4" fill="none"/><path d="M19 19L27.5 27.5" stroke="#fff" stroke-width="4.4" stroke-linecap="round"/></svg>
<div class="t" style="left:3453.40px;top:840.00px;font-size:26.5px;font-weight:400;color:#fff;transform:scaleX(0.9508)">Basic</div>
<svg class="r" style="left:3549.8px;top:850.4px;width:16.20px;height:9.00px;" viewBox="0 0 16.2 9" preserveAspectRatio="none"><path d="M1 1H15.2L8.1 8.2Z" fill="#fff" stroke="#fff" stroke-width="1.4" stroke-linejoin="round"/></svg>
<div class="t" style="left:1273.53px;top:943.00px;font-size:30.5px;font-weight:700;color:#1d2a3a;transform:scaleX(0.9734)">Object</div>
<div class="t" style="left:1878.80px;top:943.00px;font-size:30.5px;font-weight:700;color:#1d2a3a;transform:scaleX(0.9670)">Target</div>
<div class="t" style="left:2602.05px;top:943.00px;font-size:30.5px;font-weight:700;color:#1d2a3a;transform:scaleX(0.9730)">Reviewers</div>
<div class="t" style="left:3078.93px;top:943.00px;font-size:30.5px;font-weight:700;color:#1d2a3a;transform:scaleX(0.9357)">Response</div>
<div class="r" style="left:1226px;top:1004.8px;width:2397.00px;height:4.40px;background:#dee2e6;"></div>
<div class="r" style="left:1226px;top:1104.3px;width:2397.00px;height:2.00px;background:#dde1e6;"></div>
<svg class="r" style="left:1273px;top:1040.6px;width:28.40px;height:32.00px;" viewBox="0 0 28 32" preserveAspectRatio="none"><circle cx="14" cy="8" r="8" fill="#1e2b3b"/><path d="M0 30C0 22 5 18 11 18H17C23 18 28 22 28 30Q28 32 26 32H2Q0 32 0 30Z" fill="#1e2b3b"/></svg>
<div class="t" style="left:1316.93px;top:1045.00px;font-size:30.3px;font-weight:400;color:#2070a2;transform:scaleX(1.0332)">midPoint Administrator</div>
<svg class="r" style="left:1877.8px;top:1041.6px;width:32.00px;height:26.70px;" viewBox="0 0 32 27" preserveAspectRatio="none"><circle cx="16.1" cy="5.4" r="5.5" fill="#1e2b3b"/><path d="M7 21.6V17.4Q7 12.4 12 12.4H20.8Q25.8 12.4 25.8 17.4V21.6Q25.8 22.4 25 22.4H7.8Q7 22.4 7 21.6Z" fill="#1e2b3b"/><path d="M3.9 18.3A14.6 5.2 0 1 0 28.3 18.3" stroke="#1e2b3b" stroke-width="2.7" fill="none"/></svg>
<div class="t" style="left:1925.52px;top:1045.00px;font-size:30.3px;font-weight:400;color:#2070a2;transform:scaleX(0.9791)">Superuser</div>
<svg class="r" style="left:2602.7px;top:1040.6px;width:27.70px;height:32.00px;" viewBox="0 0 28 32" preserveAspectRatio="none"><circle cx="14" cy="8" r="8" fill="#1e2b3b"/><path d="M0 30C0 22 5 18 11 18H17C23 18 28 22 28 30Q28 32 26 32H2Q0 32 0 30Z" fill="#1e2b3b"/></svg>
<div class="t" style="left:2646.44px;top:1045.00px;font-size:30.3px;font-weight:400;color:#2070a2;transform:scaleX(1.0296)">midPoint Administrator</div>
<svg class="r" style="left:3097px;top:1045.6px;width:28.70px;height:21.00px;" viewBox="0 0 29 21" preserveAspectRatio="none"><path d="M2.5 11L10 18.5L26.5 2.5" stroke="#1e8449" stroke-width="4" fill="none" stroke-linecap="round" stroke-linejoin="round"/></svg>
<div class="t" style="left:3142.00px;top:1045.00px;font-size:30.3px;font-weight:400;color:#1e8449;transform:scaleX(0.9565)">Accept</div>
<div class="t" style="left:3376.60px;top:1045.00px;font-size:30.3px;font-weight:400;color:#2070a2;transform:scaleX(0.9825)">View details</div>
<div class="r" style="left:1226px;top:1202.3799999999999px;width:2397.00px;height:2.00px;background:#dde1e6;"></div>
<svg class="r" style="left:1273px;top:1138.6799999999998px;width:28.40px;height:32.00px;" viewBox="0 0 28 32" preserveAspectRatio="none"><circle cx="14" cy="8" r="8" fill="#1e2b3b"/><path d="M0 30C0 22 5 18 11 18H17C23 18 28 22 28 30Q28 32 26 32H2Q0 32 0 30Z" fill="#1e2b3b"/></svg>
<div class="t" style="left:1318.03px;top:1143.00px;font-size:30.3px;font-weight:400;color:#2070a2;transform:scaleX(0.9711)">Contractor User 41</div>
<svg class="r" style="left:1878px;top:1138.6799999999998px;width:23.70px;height:32.00px;" viewBox="0 0 26.3 35" preserveAspectRatio="none"><path d="M0 2.8Q0 0 2.8 0H23.5Q26.3 0 26.3 2.8V32.6Q26.3 35 23.9 35H16.5V30Q16.5 26.6 13.05 26.6Q9.6 26.6 9.6 30V35H2.4Q0 35 0 32.6Z" fill="#1e2b3b"/><rect x="4.20" y="6.60" width="4.2" height="4.3" rx="0.9" fill="#fff"/><rect x="10.85" y="6.60" width="4.2" height="4.3" rx="0.9" fill="#fff"/><rect x="17.50" y="6.60" width="4.2" height="4.3" rx="0.9" fill="#fff"/><rect x="4.20" y="15.30" width="4.2" height="4.3" rx="0.9" fill="#fff"/><rect x="10.85" y="15.30" width="4.2" height="4.3" rx="0.9" fill="#fff"/><rect x="17.50" y="15.30" width="4.2" height="4.3" rx="0.9" fill="#fff"/></svg>
<div class="t" style="left:1917.99px;top:1143.00px;font-size:30.3px;font-weight:400;color:#2070a2;transform:scaleX(1.0065)">Contractors</div>
<svg class="r" style="left:2602.7px;top:1138.6799999999998px;width:27.70px;height:32.00px;" viewBox="0 0 28 32" preserveAspectRatio="none"><circle cx="14" cy="8" r="8" fill="#1e2b3b"/><path d="M0 30C0 22 5 18 11 18H17C23 18 28 22 28 30Q28 32 26 32H2Q0 32 0 30Z" fill="#1e2b3b"/></svg>
<div class="t" style="left:2646.44px;top:1143.00px;font-size:30.3px;font-weight:400;color:#2070a2;transform:scaleX(1.0296)">midPoint Administrator</div>
<svg class="r" style="left:3097px;top:1143.6799999999998px;width:28.70px;height:21.00px;" viewBox="0 0 29 21" preserveAspectRatio="none"><path d="M2.5 11L10 18.5L26.5 2.5" stroke="#1e8449" stroke-width="4" fill="none" stroke-linecap="round" stroke-linejoin="round"/></svg>
<div class="t" style="left:3142.00px;top:1143.00px;font-size:30.3px;font-weight:400;color:#1e8449;transform:scaleX(0.9565)">Accept</div>
<div class="t" style="left:3376.60px;top:1143.00px;font-size:30.3px;font-weight:400;color:#2070a2;transform:scaleX(0.9825)">View details</div>
<div class="r" style="left:1226px;top:1300.46px;width:2397.00px;height:2.00px;background:#dde1e6;"></div>
<svg class="r" style="left:1273px;top:1236.76px;width:28.40px;height:32.00px;" viewBox="0 0 28 32" preserveAspectRatio="none"><circle cx="14" cy="8" r="8" fill="#1e2b3b"/><path d="M0 30C0 22 5 18 11 18H17C23 18 28 22 28 30Q28 32 26 32H2Q0 32 0 30Z" fill="#1e2b3b"/></svg>
<div class="t" style="left:1318.03px;top:1241.00px;font-size:30.3px;font-weight:400;color:#2070a2;transform:scaleX(0.9711)">Contractor User 41</div>
<svg class="r" style="left:1877.8px;top:1237.76px;width:32.00px;height:26.70px;" viewBox="0 0 32 27" preserveAspectRatio="none"><circle cx="16.1" cy="5.4" r="5.5" fill="#1e2b3b"/><path d="M7 21.6V17.4Q7 12.4 12 12.4H20.8Q25.8 12.4 25.8 17.4V21.6Q25.8 22.4 25 22.4H7.8Q7 22.4 7 21.6Z" fill="#1e2b3b"/><path d="M3.9 18.3A14.6 5.2 0 1 0 28.3 18.3" stroke="#1e2b3b" stroke-width="2.7" fill="none"/></svg>
<div class="t" style="left:1926.60px;top:1241.00px;font-size:30.3px;font-weight:400;color:#2070a2;transform:scaleX(0.9617)">AD Group Contractors_1</div>
<svg class="r" style="left:2602.7px;top:1236.76px;width:27.70px;height:32.00px;" viewBox="0 0 28 32" preserveAspectRatio="none"><circle cx="14" cy="8" r="8" fill="#1e2b3b"/><path d="M0 30C0 22 5 18 11 18H17C23 18 28 22 28 30Q28 32 26 32H2Q0 32 0 30Z" fill="#1e2b3b"/></svg>
<div class="t" style="left:2646.44px;top:1241.00px;font-size:30.3px;font-weight:400;color:#2070a2;transform:scaleX(1.0296)">midPoint Administrator</div>
<svg class="r" style="left:3097px;top:1241.76px;width:28.70px;height:21.00px;" viewBox="0 0 29 21" preserveAspectRatio="none"><path d="M2.5 11L10 18.5L26.5 2.5" stroke="#1e8449" stroke-width="4" fill="none" stroke-linecap="round" stroke-linejoin="round"/></svg>
<div class="t" style="left:3142.00px;top:1241.00px;font-size:30.3px;font-weight:400;color:#1e8449;transform:scaleX(0.9565)">Accept</div>
<div class="t" style="left:3376.60px;top:1241.00px;font-size:30.3px;font-weight:400;color:#2070a2;transform:scaleX(0.9825)">View details</div>
<div class="r" style="left:1226px;top:1398.54px;width:2397.00px;height:2.00px;background:#dde1e6;"></div>
<svg class="r" style="left:1273px;top:1334.84px;width:28.40px;height:32.00px;" viewBox="0 0 28 32" preserveAspectRatio="none"><circle cx="14" cy="8" r="8" fill="#1e2b3b"/><path d="M0 30C0 22 5 18 11 18H17C23 18 28 22 28 30Q28 32 26 32H2Q0 32 0 30Z" fill="#1e2b3b"/></svg>
<div class="t" style="left:1318.03px;top:1339.00px;font-size:30.3px;font-weight:400;color:#2070a2;transform:scaleX(0.9711)">Contractor User 41</div>
<svg class="r" style="left:1877.8px;top:1335.84px;width:32.00px;height:26.70px;" viewBox="0 0 32 27" preserveAspectRatio="none"><circle cx="16.1" cy="5.4" r="5.5" fill="#1e2b3b"/><path d="M7 21.6V17.4Q7 12.4 12 12.4H20.8Q25.8 12.4 25.8 17.4V21.6Q25.8 22.4 25 22.4H7.8Q7 22.4 7 21.6Z" fill="#1e2b3b"/><path d="M3.9 18.3A14.6 5.2 0 1 0 28.3 18.3" stroke="#1e2b3b" stroke-width="2.7" fill="none"/></svg>
<div class="t" style="left:1926.60px;top:1339.00px;font-size:30.3px;font-weight:400;color:#2070a2;transform:scaleX(0.9617)">AD Group Contractors_2</div>
<svg class="r" style="left:2602.7px;top:1334.84px;width:27.70px;height:32.00px;" viewBox="0 0 28 32" preserveAspectRatio="none"><circle cx="14" cy="8" r="8" fill="#1e2b3b"/><path d="M0 30C0 22 5 18 11 18H17C23 18 28 22 28 30Q28 32 26 32H2Q0 32 0 30Z" fill="#1e2b3b"/></svg>
<div class="t" style="left:2646.44px;top:1339.00px;font-size:30.3px;font-weight:400;color:#2070a2;transform:scaleX(1.0296)">midPoint Administrator</div>
<svg class="r" style="left:3097px;top:1339.84px;width:28.70px;height:21.00px;" viewBox="0 0 29 21" preserveAspectRatio="none"><path d="M2.5 11L10 18.5L26.5 2.5" stroke="#1e8449" stroke-width="4" fill="none" stroke-linecap="round" stroke-linejoin="round"/></svg>
<div class="t" style="left:3142.00px;top:1339.00px;font-size:30.3px;font-weight:400;color:#1e8449;transform:scaleX(0.9565)">Accept</div>
<div class="t" style="left:3376.60px;top:1339.00px;font-size:30.3px;font-weight:400;color:#2070a2;transform:scaleX(0.9825)">View details</div>
<div class="r" style="left:1226px;top:1496.62px;width:2397.00px;height:2.00px;background:#dde1e6;"></div>
<svg class="r" style="left:1273px;top:1432.9199999999998px;width:28.40px;height:32.00px;" viewBox="0 0 28 32" preserveAspectRatio="none"><circle cx="14" cy="8" r="8" fill="#1e2b3b"/><path d="M0 30C0 22 5 18 11 18H17C23 18 28 22 28 30Q28 32 26 32H2Q0 32 0 30Z" fill="#1e2b3b"/></svg>
<div class="t" style="left:1318.03px;top:1437.00px;font-size:30.3px;font-weight:400;color:#2070a2;transform:scaleX(0.9711)">Contractor User 41</div>
<svg class="r" style="left:1877.8px;top:1433.9199999999998px;width:32.00px;height:26.70px;" viewBox="0 0 32 27" preserveAspectRatio="none"><circle cx="16.1" cy="5.4" r="5.5" fill="#1e2b3b"/><path d="M7 21.6V17.4Q7 12.4 12 12.4H20.8Q25.8 12.4 25.8 17.4V21.6Q25.8 22.4 25 22.4H7.8Q7 22.4 7 21.6Z" fill="#1e2b3b"/><path d="M3.9 18.3A14.6 5.2 0 1 0 28.3 18.3" stroke="#1e2b3b" stroke-width="2.7" fill="none"/></svg>
<div class="t" style="left:1925.58px;top:1437.00px;font-size:30.3px;font-weight:400;color:#2070a2;transform:scaleX(0.9611)">Exit Procedures_1</div>
<svg class="r" style="left:2602.7px;top:1432.9199999999998px;width:27.70px;height:32.00px;" viewBox="0 0 28 32" preserveAspectRatio="none"><circle cx="14" cy="8" r="8" fill="#1e2b3b"/><path d="M0 30C0 22 5 18 11 18H17C23 18 28 22 28 30Q28 32 26 32H2Q0 32 0 30Z" fill="#1e2b3b"/></svg>
<div class="t" style="left:2646.44px;top:1437.00px;font-size:30.3px;font-weight:400;color:#2070a2;transform:scaleX(1.0296)">midPoint Administrator</div>
<svg class="r" style="left:3097px;top:1437.9199999999998px;width:28.70px;height:21.00px;" viewBox="0 0 29 21" preserveAspectRatio="none"><path d="M2.5 11L10 18.5L26.5 2.5" stroke="#1e8449" stroke-width="4" fill="none" stroke-linecap="round" stroke-linejoin="round"/></svg>
<div class="t" style="left:3142.00px;top:1437.00px;font-size:30.3px;font-weight:400;color:#1e8449;transform:scaleX(0.9565)">Accept</div>
<div class="t" style="left:3376.60px;top:1437.00px;font-size:30.3px;font-weight:400;color:#2070a2;transform:scaleX(0.9825)">View details</div>
<div class="r" style="left:1226px;top:1594.6999999999998px;width:2397.00px;height:2.00px;background:#dde1e6;"></div>
<svg class="r" style="left:1273px;top:1531.0px;width:28.40px;height:32.00px;" viewBox="0 0 28 32" preserveAspectRatio="none"><circle cx="14" cy="8" r="8" fill="#1e2b3b"/><path d="M0 30C0 22 5 18 11 18H17C23 18 28 22 28 30Q28 32 26 32H2Q0 32 0 30Z" fill="#1e2b3b"/></svg>
<div class="t" style="left:1318.03px;top:1535.00px;font-size:30.3px;font-weight:400;color:#2070a2;transform:scaleX(0.9711)">Contractor User 41</div>
<svg class="r" style="left:1877.8px;top:1532.0px;width:32.00px;height:26.70px;" viewBox="0 0 32 27" preserveAspectRatio="none"><circle cx="16.1" cy="5.4" r="5.5" fill="#1e2b3b"/><path d="M7 21.6V17.4Q7 12.4 12 12.4H20.8Q25.8 12.4 25.8 17.4V21.6Q25.8 22.4 25 22.4H7.8Q7 22.4 7 21.6Z" fill="#1e2b3b"/><path d="M3.9 18.3A14.6 5.2 0 1 0 28.3 18.3" stroke="#1e2b3b" stroke-width="2.7" fill="none"/></svg>
<div class="t" style="left:1925.58px;top:1535.00px;font-size:30.3px;font-weight:400;color:#2070a2;transform:scaleX(0.9611)">Exit Procedures_2</div>
<svg class="r" style="left:2602.7px;top:1531.0px;width:27.70px;height:32.00px;" viewBox="0 0 28 32" preserveAspectRatio="none"><circle cx="14" cy="8" r="8" fill="#1e2b3b"/><path d="M0 30C0 22 5 18 11 18H17C23 18 28 22 28 30Q28 32 26 32H2Q0 32 0 30Z" fill="#1e2b3b"/></svg>
<div class="t" style="left:2646.44px;top:1535.00px;font-size:30.3px;font-weight:400;color:#2070a2;transform:scaleX(1.0296)">midPoint Administrator</div>
<svg class="r" style="left:3097px;top:1536.0px;width:28.70px;height:21.00px;" viewBox="0 0 29 21" preserveAspectRatio="none"><path d="M2.5 11L10 18.5L26.5 2.5" stroke="#1e8449" stroke-width="4" fill="none" stroke-linecap="round" stroke-linejoin="round"/></svg>
<div class="t" style="left:3142.00px;top:1535.00px;font-size:30.3px;font-weight:400;color:#1e8449;transform:scaleX(0.9565)">Accept</div>
<div class="t" style="left:3376.60px;top:1535.00px;font-size:30.3px;font-weight:400;color:#2070a2;transform:scaleX(0.9825)">View details</div></body></html>
